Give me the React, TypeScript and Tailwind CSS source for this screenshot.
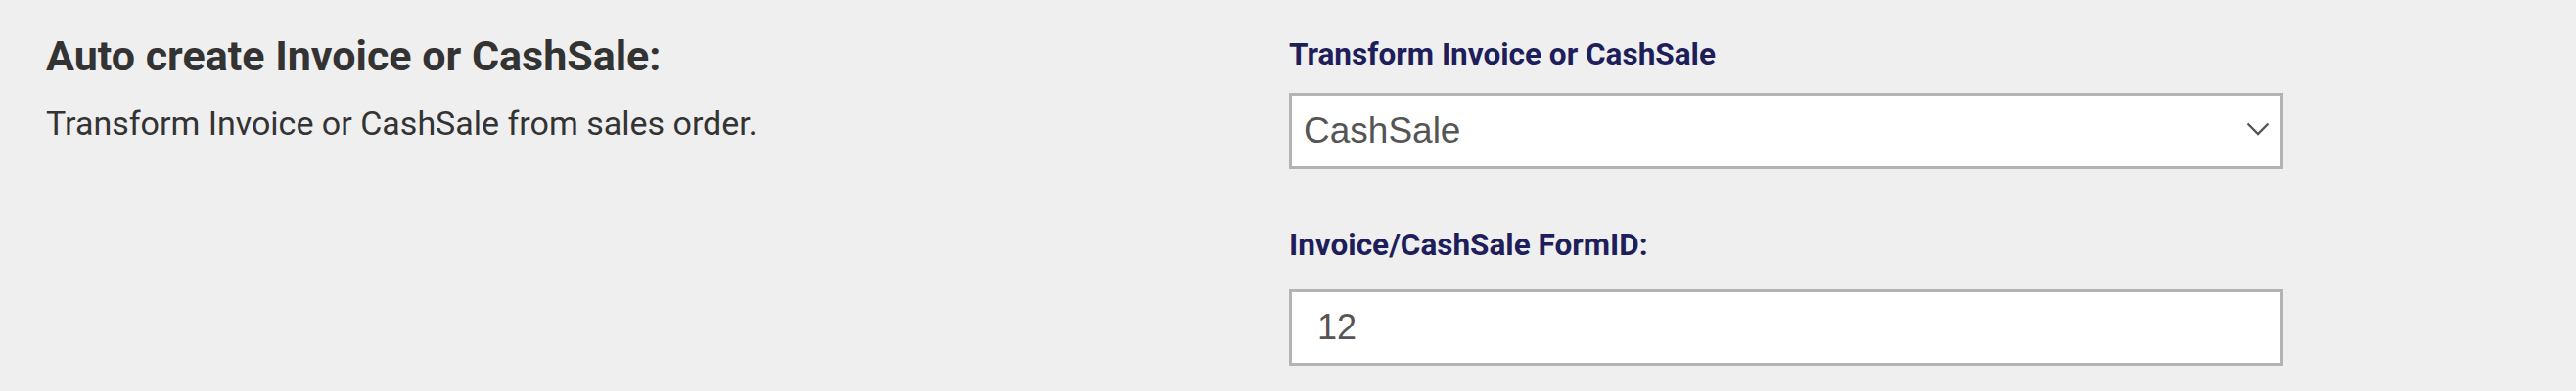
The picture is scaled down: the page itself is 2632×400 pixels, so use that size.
export default function App() {
    return (
        <div className="h-[400px] w-full bg-[#efefef] flex">
            <div className="w-[1317px] pl-[47px] pt-[32px] font-['Roboto',sans-serif] text-[#333333]">
                <h2 className="text-[43px] leading-[50px] font-bold">Auto create Invoice or CashSale:</h2>
                <p className="mt-[24px] text-[34px] leading-[40px]">Transform Invoice or CashSale from sales order.</p>
            </div>
            <div className="w-[1016px] pt-[37px]">
                <label className="block font-['Roboto',sans-serif] text-[31.5px] leading-[37px] font-bold text-[#1e1e5a]">Transform Invoice or CashSale</label>
                <div className="mt-[21px] h-[78px] border-[3px] border-[#b3b3b3] bg-white flex items-center justify-between pl-[12px] pr-[11px] font-['Liberation_Sans',Arial,sans-serif] text-[37px] text-[#555555]">
                    <span>CashSale</span>
                    <svg width="24" height="14" viewBox="0 0 24 14" fill="none" stroke="#555555" strokeWidth="2.4" className="mt-[-4px]">
                        <polyline points="1.5,1.5 12,12 22.5,1.5" />
                    </svg>
                </div>
                <label className="block mt-[59px] font-['Roboto',sans-serif] text-[31.5px] leading-[37px] font-bold text-[#1e1e5a]">Invoice/CashSale FormID:</label>
                <div className="mt-[27px] h-[78px] border-[3px] border-[#b3b3b3] bg-white flex items-center pl-[26px] font-['Liberation_Sans',Arial,sans-serif] text-[36px] text-[#555555]">
                    <span>12</span>
                </div>
            </div>
        </div>
    )
}
